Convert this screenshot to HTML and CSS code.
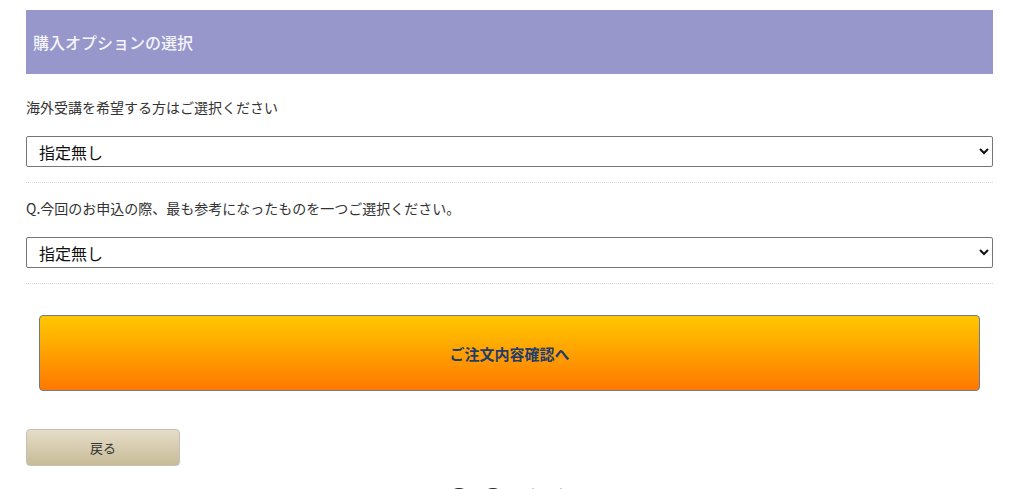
FILE: index.html
```html
<!DOCTYPE html>
<html lang="ja">
<head>
    <meta charset="UTF-8">
    <meta name="viewport" content="width=device-width, initial-scale=1.0">
    <title>購入オプションの選択</title>
    <link rel="stylesheet" href="styles.css">
</head>

<body>
    <div class="page">
        <h2 class="section-title">購入オプションの選択</h2>

        <div class="option-item">
            <label for="option1">海外受講を希望する方はご選択ください</label>
            <select id="option1">
                <option>指定無し</option>
            </select>
        </div>

        <div class="option-item">
            <label for="option2">Q.今回のお申込の際、最も参考になったものを一つご選択ください。</label>
            <select id="option2">
                <option>指定無し</option>
            </select>
        </div>

        <div class="confirm-area">
            <button class="confirm-btn">ご注文内容確認へ</button>
        </div>

        <div class="back-area">
            <button class="back-btn">戻る</button>
        </div>

        <div class="footer-icons">
            <span class="dot"></span>
            <span class="dot"></span>
            <span class="mark"></span>
            <span class="mark"></span>
        </div>
    </div>
</body>
</html>
```

FILE: styles.css
```css
body {
    font-family: "Noto Sans CJK JP", "Liberation Sans", sans-serif;
    color: #333;
    background: #fff;
    margin: 0;
}

.page {
    width: 967px;
    padding: 10px 0 0 26px;
}

.section-title {
    background: #9797cb;
    color: #f4f4fa;
    font-size: 16px;
    font-weight: 500;
    height: 64px;
    line-height: 64px;
    margin: 0 0 8px;
    padding: 0 7px;
}

.option-item {
    padding: 15px 0 15px;
    border-bottom: 1px dotted #d8d8d8;
}

.option-item label {
    display: block;
    height: 20px;
    font-size: 14px;
    line-height: 20px;
    margin-bottom: 19px;
    overflow: hidden;
}

.option-item select {
    display: block;
    width: 100%;
    height: 31px;
    font-family: inherit;
    font-size: 16px;
    color: #111;
    background: #fff;
    border: 1px solid #767676;
    border-radius: 2px;
    padding: 0 8px;
}

.confirm-area {
    padding: 31px 13px 0;
}

.confirm-btn {
    display: block;
    width: 100%;
    height: 76px;
    font-family: inherit;
    font-size: 15px;
    font-weight: bold;
    color: #1e3c6e;
    background: linear-gradient(#ffc800, #ff7800);
    border: 1px solid #6d7b8c;
    border-radius: 4px;
    cursor: pointer;
}

.back-area {
    padding-top: 38px;
}

.back-btn {
    width: 154px;
    height: 37px;
    font-family: inherit;
    font-size: 13px;
    color: #333;
    background: linear-gradient(#e6ddc9, #c7bb97);
    border: 1px solid #c4c0b4;
    border-radius: 4px;
    cursor: pointer;
}

.footer-icons {
    display: flex;
    align-items: flex-start;
    gap: 8px;
    padding: 22px 0 0 420px;
    height: 20px;
}

.dot {
    width: 20px;
    height: 20px;
    border: 3px solid #222;
    border-radius: 50%;
}

.mark {
    width: 2px;
    height: 10px;
    background: #ccc;
    margin-left: 18px;
}
```
